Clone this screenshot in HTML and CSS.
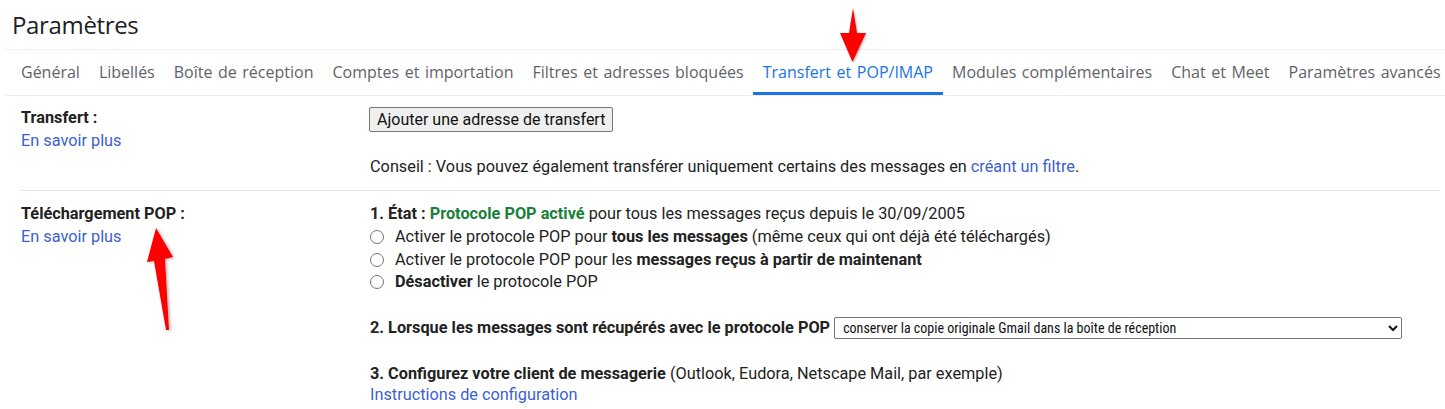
FILE: index.html
```html
<!DOCTYPE html>
<html lang="fr">
<head>
<meta charset="utf-8">
<title>Paramètres</title>
<link rel="stylesheet" href="styles.css">
</head>
<body>
<div class="page">
  <header class="title-bar">
    <h1 class="title">Paramètres</h1>
  </header>
  <nav class="tabs">
    <a class="tab">Général</a>
    <a class="tab">Libellés</a>
    <a class="tab">Boîte de réception</a>
    <a class="tab">Comptes et importation</a>
    <a class="tab">Filtres et adresses bloquées</a>
    <a class="tab tab-active">Transfert et POP/IMAP</a>
    <a class="tab">Modules complémentaires</a>
    <a class="tab">Chat et Meet</a>
    <a class="tab">Paramètres avancés</a>
  </nav>
  <main class="settings">
    <section class="row row-forward">
      <div class="label-col">
        <div class="label">Transfert :</div>
        <a class="link">En savoir plus</a>
      </div>
      <div class="value-col">
        <button class="btn" type="button">Ajouter une adresse de transfert</button>
        <p class="tip">Conseil : Vous pouvez également transférer uniquement certains des messages en <a class="link">créant un filtre</a>.</p>
      </div>
    </section>
    <section class="row row-pop">
      <div class="label-col">
        <div class="label">Téléchargement POP :</div>
        <a class="link">En savoir plus</a>
      </div>
      <div class="value-col">
        <div class="line"><b>1. État : </b><b class="ok">Protocole POP activé</b> pour tous les messages reçus depuis le 30/09/2005</div>
        <label class="radio-line"><input type="radio" name="pop" class="radio"><span>Activer le protocole POP pour <b>tous les messages</b> (même ceux qui ont déjà été téléchargés)</span></label>
        <label class="radio-line"><input type="radio" name="pop" class="radio"><span>Activer le protocole POP pour les <b>messages reçus à partir de maintenant</b></span></label>
        <label class="radio-line"><input type="radio" name="pop" class="radio"><span><b>Désactiver</b> le protocole POP</span></label>
        <div class="select-line">
          <b>2. Lorsque les messages sont récupérés avec le protocole POP</b>
          <select class="select">
            <option>conserver la copie originale Gmail dans la boîte de réception</option>
          </select>
        </div>
        <div class="config">
          <div class="line"><b>3. Configurez votre client de messagerie</b> (Outlook, Eudora, Netscape Mail, par exemple)</div>
          <a class="link config-link">Instructions de configuration</a>
        </div>
      </div>
    </section>
  </main>
  <svg class="arrow arrow-tab" width="40" height="64" viewBox="0 0 40 64">
    <defs>
      <filter id="sh1" x="-50%" y="-50%" width="200%" height="200%"><feDropShadow dx="1" dy="1" stdDeviation="1.2" flood-color="#000" flood-opacity="0.3"/></filter>
    </defs>
    <path d="M20 4 L24 29 L33 29 L19.5 58 L7 29 L16 29 Z" fill="#ff0000" filter="url(#sh1)"/>
  </svg>
  <svg class="arrow arrow-pop" width="50" height="115" viewBox="0 0 50 115">
    <defs>
      <filter id="sh2" x="-50%" y="-50%" width="200%" height="200%"><feDropShadow dx="1.5" dy="1" stdDeviation="1.5" flood-color="#000" flood-opacity="0.3"/></filter>
    </defs>
    <path d="M16 4 L33 33 L25 35 L29 106 L26 106 L14 37 L7 38 Z" fill="#ff0000" filter="url(#sh2)"/>
  </svg>
</div>
</body>
</html>
```

FILE: styles.css
```css
html, body {
  margin: 0;
  padding: 0;
  background: #fff;
}

body {
  font-family: Roboto, "Liberation Sans", Arial, sans-serif;
  font-size: 16.3px;
  color: #222;
}

.page {
  position: relative;
  width: 1445px;
  height: 409px;
  overflow: hidden;
}

.title-bar {
  margin-left: 5px;
  height: 49px;
  border-bottom: 1px solid #eceff1;
  display: flex;
  align-items: center;
}

.title {
  margin: 0 0 0 7px;
  font-family: "Open Sans", Roboto, sans-serif;
  font-weight: 400;
  font-size: 24px;
  color: #202124;
  letter-spacing: -0.35px;
}

.tabs {
  margin-left: 5px;
  padding-left: 6.5px;
  height: 45px;
  border-bottom: 1px solid #eceff1;
  display: flex;
  align-items: stretch;
}

.tab {
  display: flex;
  align-items: center;
  padding: 2px 9.5px 0;
  font-family: "Open Sans", Roboto, sans-serif;
  font-size: 16px;
  font-weight: 500;
  word-spacing: 1.4px;
  color: #5f6368;
  border-bottom: 3px solid transparent;
  white-space: nowrap;
}

.tab-active {
  color: #1a73e8;
  border-bottom-color: #1a73e8;
}

.settings {
  margin-left: 21px;
  margin-right: 5px;
}

.row {
  display: flex;
}

.row-forward {
  padding-top: 12px;
  padding-bottom: 12px;
  border-bottom: 1px solid #e5e5e5;
}

.row-pop {
  padding-top: 13px;
}

.label-col {
  width: 349px;
  flex: none;
  line-height: 23px;
}

.label {
  font-weight: 700;
  margin-top: -2px;
}

.link {
  color: #3c5fd2;
  text-decoration: none;
}

.value-col {
  flex: 1;
  line-height: 23px;
}

.btn {
  font-family: Roboto, "Liberation Sans", Arial, sans-serif;
  font-size: 16px;
  color: #111;
  background: #efefef;
  border: 1px solid #767676;
  border-radius: 2px;
  height: 25px;
  padding: 0 7px;
  margin: -1px 0 0 -1px;
  display: block;
}

.tip {
  margin: 23px 0 0 0;
}

.line {
  margin-top: -2px;
}

.ok {
  color: #188038;
}

.radio-line {
  display: flex;
  align-items: center;
  height: 22.7px;
}

.radio {
  width: 14px;
  height: 14px;
  margin: 1px 11px 0 0;
  flex: none;
}

.select-line {
  display: flex;
  align-items: center;
  margin-top: 23px;
  gap: 4px;
}

.select {
  width: 568px;
  height: 22px;
  font-family: "Liberation Sans Narrow", "Roboto Condensed", "DejaVu Sans Condensed", sans-serif;
  font-size: 14px;
  color: #111;
  border: 1px solid #767676;
  border-radius: 2px;
  background: #fff;
  padding: 0 4px;
}

.config {
  margin-top: 25px;
}

.config-link {
  display: block;
  line-height: 20px;
  margin-top: 0;
}

.arrow {
  position: absolute;
  pointer-events: none;
}

.arrow-tab {
  left: 833px;
  top: 4px;
}

.arrow-pop {
  left: 140px;
  top: 224px;
}
```
